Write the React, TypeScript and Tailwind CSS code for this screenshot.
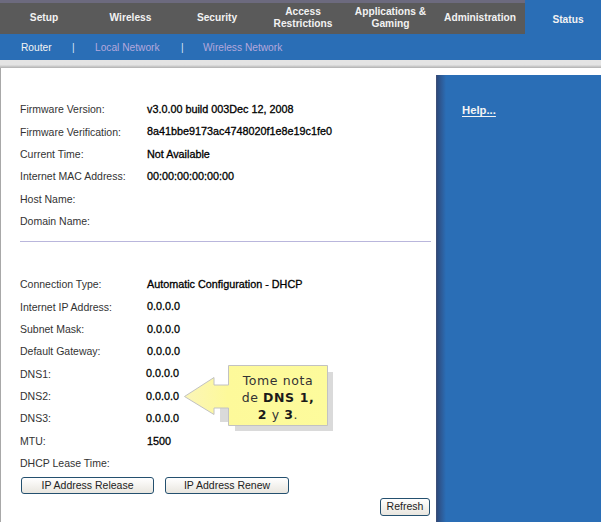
const TABS = [
  { w: 'w-[86px]', label: ['Setup'] },
  { w: 'w-[87px]', label: ['Wireless'] },
  { w: 'w-[86px]', label: ['Security'] },
  { w: 'w-[86px]', label: ['Access', 'Restrictions'] },
  { w: 'w-[89px]', label: ['Applications &', 'Gaming'] },
  { w: 'w-[90px]', label: ['Administration'] },
];

const TOP_ROWS: [string, string][] = [
  ['Firmware Version:', 'v3.0.00 build 003Dec 12, 2008'],
  ['Firmware Verification:', '8a41bbe9173ac4748020f1e8e19c1fe0'],
  ['Current Time:', 'Not Available'],
  ['Internet MAC Address:', '00:00:00:00:00:00'],
  ['Host Name:', ''],
  ['Domain Name:', ''],
];

const BOTTOM_ROWS: [string, string][] = [
  ['Connection Type:', 'Automatic Configuration - DHCP'],
  ['Internet IP Address:', '0.0.0.0'],
  ['Subnet Mask:', '0.0.0.0'],
  ['Default Gateway:', '0.0.0.0'],
  ['DNS1:', '0.0.0.0'],
  ['DNS2:', '0.0.0.0'],
  ['DNS3:', '0.0.0.0'],
  ['MTU:', '1500'],
  ['DHCP Lease Time:', ''],
];

function Row({ label, value }: { label: string; value: string }) {
  return (
    <div className="flex h-[22.37px] items-center">
      <div className="w-[127px] text-[#333333]">{label}</div>
      <div className={`-mt-[2px] text-[10.8px] text-black [-webkit-text-stroke:0.3px_black] ${label.startsWith('DNS') ? '-ml-px' : ''}`}>{value}</div>
    </div>
  );
}

function Btn({ className, children }: { className: string; children: string }) {
  return (
    <button className={`flex items-center justify-center rounded-[3px] border border-[#24506f] bg-gradient-to-b from-white to-[#e9e6df] text-[#222222] ${className}`}>
      {children}
    </button>
  );
}

export default function App() {
  return (
    <div className="h-[524px] w-[613px] bg-white font-['Liberation_Sans',Arial,sans-serif] text-[10.5px]">
      <div className="h-[522px] w-[601px] flex flex-col">
        <div className="flex h-[60px] shrink-0 bg-[#2a6eb6]">
          <div className="flex h-[34px] w-[525px] border-t-[3px] border-[#6c6a7e] bg-[#5a5a5a] pb-[2px] pl-px">
            {TABS.map((t) => (
              <div key={t.label[0]} className={`${t.w} flex flex-col items-center justify-center text-center text-[10.2px] font-bold leading-[11.7px] text-[#f2f2f2]`}>
                {t.label.map((l) => (
                  <div key={l}>{l}</div>
                ))}
              </div>
            ))}
          </div>
          <div className="flex h-[40px] flex-1 items-center justify-center pl-[10px] text-[10.2px] font-bold text-[#f2f2f2]">Status</div>
        </div>
        <div className="-mt-[25px] mb-[-1px] flex h-[26px] shrink-0 items-center pl-[21px] text-[10.2px] text-[#b4a8dc]">
          <span className="w-[51px] text-[#f4f4f4]">Router</span>
          <span className="w-[23px] text-[#d8e4f4]">|</span>
          <span className="w-[86px]">Local Network</span>
          <span className="w-[22px] text-[#d8e4f4]">|</span>
          <span>Wireless Network</span>
        </div>
        <div className="h-[8px] shrink-0 bg-gradient-to-b from-[#e4e4e4] from-60% to-[#b0b0b0]" />
        <div className="flex min-h-0 flex-1 pt-[7px]">
          <div className="relative -mt-[7px] w-[436px] shrink-0 border-l border-[#a8a8a8] pl-[19px] pr-[5px] pt-[31px]">
            {TOP_ROWS.map(([l, v]) => (
              <Row key={l} label={l} value={v} />
            ))}
            <div className="mt-[7.8px] h-px bg-[#b9b6dc]" />
            <div className="mt-[32px]">
              {BOTTOM_ROWS.map(([l, v]) => (
                <Row key={l} label={l} value={v} />
              ))}
            </div>
            <div className="mt-[2px] flex gap-[11px] pl-px">
              <Btn className="h-[17px] w-[133px]">IP Address Release</Btn>
              <Btn className="h-[17px] w-[124px]">IP Address Renew</Btn>
            </div>
            <div className="mt-[4px] flex justify-end pr-[1px]">
              <Btn className="h-[18px] w-[50px]">Refresh</Btn>
            </div>

            <div className="absolute left-[182px] top-[297px] h-[70px] w-[156px]">
              <svg width="156" height="70" viewBox="0 0 156 70" className="absolute left-0 top-0">
                <defs>
                  <linearGradient id="cg" x1="0" x2="1" y1="0" y2="0">
                    <stop offset="0" stopColor="#fbf5b8" />
                    <stop offset="0.3" stopColor="#fdf99a" />
                    <stop offset="1" stopColor="#fdfb9c" />
                  </linearGradient>
                </defs>
                <polygon points="52,7 150,7 150,66 52,66" fill="#dadada" />
                <polygon points="36,24 50,24 50,51 36,51" fill="#dadada" transform="translate(1,6)" />
                <polygon points="1.5,31.5 31,12.5 31,20 45.5,20 45.5,0.5 144.5,0.5 144.5,60.5 45.5,60.5 45.5,43 31,43 31,49.5" fill="url(#cg)" stroke="#c2c2c2" strokeWidth="1" />
              </svg>
              <div className="absolute left-[46px] top-[7px] w-[98px] text-center font-['DejaVu_Sans',Verdana,sans-serif] text-[12.5px] leading-[17px] tracking-[0.6px] text-[#333333]">
                Tome nota
                <br />
                de <b className="text-[#1a1a1a]">DNS 1,</b>
                <br />
                <b className="text-[#1a1a1a]">2</b> y <b className="text-[#1a1a1a]">3</b>.
              </div>
            </div>
          </div>
          <div className="relative ml-0 flex-1 border-l border-[#3d4f78] bg-[#2a6eb6] pl-[25px] pt-[27px]">
            <div className="absolute inset-y-0 left-0 w-[9px] bg-gradient-to-r from-[#2d4a7c] to-[#2a6eb6]" />
            <a className="relative text-[11.3px] font-bold text-[#f4f4f4] underline underline-offset-2">Help...</a>
          </div>
        </div>
      </div>
    </div>
  );
}
